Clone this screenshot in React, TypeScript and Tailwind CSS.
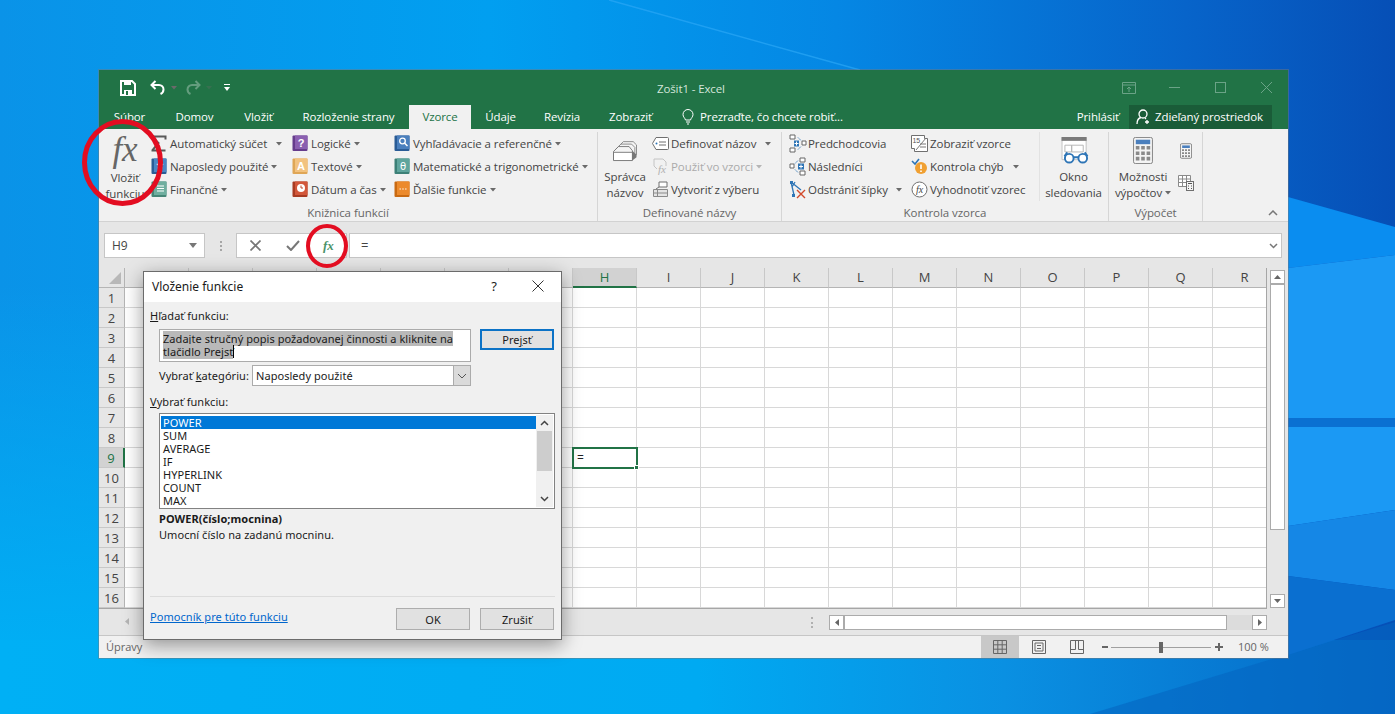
import { ReactNode } from 'react';

const COLUMNS = ['A', 'B', 'C', 'D', 'E', 'F', 'G', 'H', 'I', 'J', 'K', 'L', 'M', 'N', 'O', 'P', 'Q', 'R'];
// columns A-G sit behind the dialog, their letters never show
const HIDDEN_LABELS = ['A', 'B', 'C', 'D', 'E', 'F', 'G'];
const ROWS = Array.from({ length: 16 }, (_, i) => i + 1);
const FUNCTIONS = ['POWER', 'SUM', 'AVERAGE', 'IF', 'HYPERLINK', 'COUNT', 'MAX'];

const Wallpaper = () => (
  <svg className="absolute inset-0" width="1395" height="714" viewBox="0 0 1395 714">
    <defs>
      <linearGradient id="base" x1="0" y1="0" x2="1" y2="0">
        <stop offset="0" stopColor="#0a93e8" />
        <stop offset="0.35" stopColor="#019ff0" />
        <stop offset="0.6" stopColor="#0587e4" />
        <stop offset="0.85" stopColor="#0764ca" />
        <stop offset="1" stopColor="#064fb6" />
      </linearGradient>
      <linearGradient id="low" x1="0" y1="0" x2="0" y2="1">
        <stop offset="0.4" stopColor="#00b4f6" stopOpacity="0" />
        <stop offset="0.95" stopColor="#00b0f5" stopOpacity="1" />
      </linearGradient>
      <linearGradient id="strip" x1="0" y1="0" x2="1" y2="0">
        <stop offset="0" stopColor="#00b0f5" />
        <stop offset="0.5" stopColor="#00aaf2" />
        <stop offset="0.72" stopColor="#0a90e2" />
        <stop offset="1" stopColor="#0568c6" />
      </linearGradient>
    </defs>
    <rect width="1395" height="714" fill="url(#base)" />
    <rect width="99" height="714" fill="url(#low)" />
    <rect y="640" width="1395" height="74" fill="url(#strip)" />
    <polygon points="1090,714 1395,622 1395,714" fill="#0566c2" fillOpacity="0.6" />
    <polygon points="1288,197 1395,227 1395,255 1288,268" fill="#0a8df0" />
    <polygon points="1288,268 1395,255 1395,510 1288,526" fill="#1b99f4" />
    <polygon points="1288,526 1395,510 1395,590 1288,576" fill="#1587e6" />
    <polygon points="1288,576 1395,590 1395,620 1288,655" fill="#0a6fd0" />
    <rect x="1288" y="418" width="107" height="9" fill="#0a70d2" />
    <line x1="609" y1="0" x2="860" y2="70" stroke="#2ba6f5" strokeWidth="1.5" strokeOpacity="0.7" />
  </svg>
);

const Caret = ({ ml = 'ml-[4px]', dim = false }: { ml?: string; dim?: boolean }) => (
  <svg width="6" height="4" viewBox="0 0 6 4" className={ml}>
    <path d="M0 0h6L3 3.5z" fill={dim ? '#b5b5b5' : '#6a6a6a'} />
  </svg>
);

const Book = ({ page, spine, children }: { page: string; spine: string; children?: ReactNode }) => (
  <svg width="16" height="17" viewBox="0 0 16 17">
    <rect x="0.5" y="0.5" width="15" height="15.5" rx="1" fill={spine} />
    <rect x="3" y="0.5" width="12.5" height="13.5" fill={page} />
    {children}
  </svg>
);

const icons: Record<string, ReactNode> = {
  sigma: (
    <svg width="17" height="17" viewBox="0 0 17 17">
      <path d="M1.5 1.5h13v3M14.5 15.5h-13v-0.5l6-7-6-6" fill="none" stroke="#595959" strokeWidth="2" />
    </svg>
  ),
  recent: (
    <Book page="#4a86c5" spine="#2a5d96">
      <path d="M9 3l1.2 2.6 2.6.3-2 1.8.6 2.7L9 9 6.6 10.4l.6-2.7-2-1.8 2.6-.3z" fill="#d8e7f6" />
    </Book>
  ),
  finance: (
    <Book page="#6fae9f" spine="#468677">
      <path d="M6 5h7M6 7.5h7M6 10h7" stroke="#fff" strokeWidth="1.2" />
    </Book>
  ),
  logic: (
    <Book page="#8a5fb0" spine="#653c8c">
      <text x="9" y="12" textAnchor="middle" fontSize="11" fontWeight="700" fill="#fff" fontFamily="Liberation Sans">?</text>
    </Book>
  ),
  text: (
    <Book page="#f2c27f" spine="#dfa656">
      <text x="9" y="12" textAnchor="middle" fontSize="11" fontWeight="700" fill="#fff" fontFamily="Liberation Sans">A</text>
    </Book>
  ),
  date: (
    <Book page="#d2573a" spine="#a83b22">
      <circle cx="9" cy="7" r="4" fill="#fff" />
      <path d="M9 4.5V7h2" fill="none" stroke="#c1482c" strokeWidth="1" />
    </Book>
  ),
  lookup: (
    <Book page="#4a7fbd" spine="#2a5c96">
      <circle cx="8.5" cy="6" r="2.8" fill="none" stroke="#fff" strokeWidth="1.3" />
      <path d="M10.5 8l3 3" stroke="#fff" strokeWidth="1.5" />
    </Book>
  ),
  math: (
    <Book page="#5fa59d" spine="#3c8077">
      <text x="9" y="11.5" textAnchor="middle" fontSize="10" fill="#fff" fontFamily="DejaVu Sans">θ</text>
    </Book>
  ),
  more: (
    <Book page="#ec8a2c" spine="#c96a12">
      <path d="M5.5 8h1.4M8.3 8h1.4M11.1 8h1.4" stroke="#fff" strokeWidth="1.2" />
    </Book>
  ),
  define: (
    <svg width="17" height="13" viewBox="0 0 17 13">
      <path d="M4 .5h11.5a1 1 0 0 1 1 1v10a1 1 0 0 1-1 1H4L.5 6.5z" fill="#fff" stroke="#6f6f6f" />
      <circle cx="4.5" cy="6.5" r="1" fill="#2e75b6" />
      <path d="M7 5h7M7 8h7" stroke="#6f6f6f" />
    </svg>
  ),
  useFormula: (
    <svg width="17" height="17" viewBox="0 0 17 17">
      <path d="M2 1h9l3 3v4M2 1v7l3 3" fill="none" stroke="#c4c4c4" />
      <text x="6" y="15" fontSize="11" fontStyle="italic" fill="#b0b0b0" fontFamily="Liberation Serif">fx</text>
    </svg>
  ),
  createSel: (
    <svg width="17" height="17" viewBox="0 0 17 17">
      <path d="M1.5 8.5h14v7h-14z" fill="#e4e4e4" stroke="#8a8a8a" />
      <path d="M5.5 8.5v7M1.5 12h14" stroke="#8a8a8a" />
      <path d="M7 1h8v5H7z" fill="#fff" stroke="#6f6f6f" />
      <path d="M7 6L4 8" stroke="#6f6f6f" />
    </svg>
  ),
  precedents: (
    <svg width="18" height="19" viewBox="0 0 18 19">
      <path d="M1 1h5v4H1zM1 14h5v4H1zM13 7h4v4h-4z" fill="#fff" stroke="#666" />
      <path d="M5 6.5h5v6H5z" fill="#2e75b6" />
      <path d="M7.5 7.5v4M5.5 9.5h4" stroke="#fff" />
      <path d="M9 3.5l3 3M9 15.5l3-3" stroke="#2e75b6" strokeDasharray="1.5 1" />
    </svg>
  ),
  dependents: (
    <svg width="18" height="19" viewBox="0 0 18 19">
      <path d="M11 1h5v4h-5zM11 14h5v4h-5zM1 7h4v4H1z" fill="#fff" stroke="#666" />
      <path d="M9 6.5h6v6H9z" fill="#2e75b6" />
      <path d="M12 7.5v4M10 9.5h4" stroke="#fff" />
      <path d="M6 6.5l3-3M6 12.5l3 3" stroke="#2e75b6" strokeDasharray="1.5 1" />
    </svg>
  ),
  removeArrows: (
    <svg width="18" height="18" viewBox="0 0 18 18">
      <path d="M2 1l3 13M2 1l10 8M6 1l-3 5" fill="none" stroke="#2e75b6" strokeWidth="1.3" />
      <path d="M1 0h3v3H1zM3 13h3v3H3z" fill="#2e75b6" />
      <path d="M8 9l8 8M16 9l-8 8" stroke="#d2492a" strokeWidth="1.4" />
    </svg>
  ),
  showFormulas: (
    <svg width="17" height="17" viewBox="0 0 17 17">
      <path d="M.5.5h13v3h3v13h-13v-3h-3z" fill="#fff" stroke="#6f6f6f" />
      <text x="1.5" y="8" fontSize="7" fill="#555" fontFamily="Liberation Sans">15</text>
      <path d="M5 15l10-12M9 9h6M9 12h6" stroke="#777" />
    </svg>
  ),
  errorCheck: (
    <svg width="17" height="17" viewBox="0 0 17 17">
      <path d="M1 3l3 3 4-5" fill="none" stroke="#2e75b6" strokeWidth="1.6" />
      <circle cx="10" cy="10" r="6" fill="#f0a032" />
      <path d="M10 6.500v4.500M10 12.500v1.500" stroke="#fff" strokeWidth="1.6" />
    </svg>
  ),
  evaluate: (
    <svg width="17" height="17" viewBox="0 0 17 17">
      <circle cx="8.5" cy="8.5" r="7.5" fill="#fff" stroke="#6f6f6f" />
      <text x="8.5" y="12" textAnchor="middle" fontSize="10" fontStyle="italic" fill="#444" fontFamily="Liberation Serif">fx</text>
    </svg>
  ),
};

const Item = ({
  icon,
  label,
  caret,
  dim = false,
}: {
  icon: string;
  label: string;
  caret?: string;
  dim?: boolean;
}) => (
  <div className={`flex h-[23px] items-center whitespace-nowrap ${dim ? 'text-[#ababab]' : ''}`}>
    <span className="flex w-[19px] shrink-0 items-center justify-start">{icons[icon]}</span>
    <span>{label}</span>
    {caret && <Caret ml={caret} dim={dim} />}
  </div>
);

const Group = ({
  label,
  className,
  children,
}: {
  label: string;
  className: string;
  children: ReactNode;
}) => (
  <div className={`flex shrink-0 flex-col border-r border-[#d6d6d6] ${className}`}>
    <div className="flex h-[69px]">{children}</div>
    <div className="mt-[4px] text-center leading-[15px] text-[#666]">{label}</div>
  </div>
);

const ToolBar = () => (
  <div className="flex h-[59px] flex-col bg-[#217346] font-['Open_Sans',sans-serif] text-[11.5px] tracking-[-0.12px] text-white">
    <div className="flex h-[35px] items-center">
      <div className="flex w-[558px] items-center pl-[21px]">
        <svg width="16" height="16" viewBox="0 0 16 16">
          <path d="M1 1h11l3 3v11H1z" fill="none" stroke="#fff" strokeWidth="2" />
          <path d="M4 1h7v4H4zM4 10h8v5H4z" fill="#fff" />
          <path d="M6 11h2v4H6z" fill="#217346" />
        </svg>
        <svg className="ml-[14px]" width="16" height="16" viewBox="0 0 16 16">
          <path d="M5.5 1L1.5 5l4 4" fill="none" stroke="#fff" strokeWidth="2" />
          <path d="M2 5h7a4.5 4.5 0 0 1 4.5 4.5c0 2-1 3.5-3 4.5" fill="none" stroke="#fff" strokeWidth="2" />
        </svg>
        <Caret ml="ml-[5px]" />
        <svg className="ml-[8px]" width="16" height="16" viewBox="0 0 16 16" opacity="0.3">
          <path d="M10.5 1l4 4-4 4" fill="none" stroke="#fff" strokeWidth="2" />
          <path d="M14 5H7a4.5 4.5 0 0 0-4.5 4.5c0 2 1 3.5 3 4.5" fill="none" stroke="#fff" strokeWidth="2" />
        </svg>
        <span className="opacity-30">
          <Caret ml="ml-[5px]" />
        </span>
        <svg className="ml-[12px]" width="6" height="7" viewBox="0 0 6 7">
          <path d="M0 0h6v1H0zM0 3h6L3 7z" fill="#fff" />
        </svg>
      </div>
      <div className="mt-[2px] text-[#d4e6db]">Zošit1 - Excel</div>
      <div className="ml-auto flex items-center pr-[16px] text-[#6ba387]">
        <svg width="14" height="12" viewBox="0 0 14 12">
          <path d="M.5.5h13v11H.5zM.5 3h13M7 10V5M5 7l2-2 2 2" fill="none" stroke="currentColor" />
        </svg>
        <div className="ml-[33px] h-px w-[11px] bg-[#6ba387]" />
        <div className="ml-[35px] h-[11px] w-[11px] border border-[#6ba387]" />
        <svg className="ml-[35px]" width="11" height="11" viewBox="0 0 11 11">
          <path d="M0 0l11 11M11 0L0 11" stroke="currentColor" />
        </svg>
      </div>
    </div>
    <div className="flex h-[24px] items-stretch leading-[24px]">
      <div className="w-[61px] text-center">Súbor</div>
      <div className="w-[69px] text-center">Domov</div>
      <div className="w-[59px] text-center">Vložiť</div>
      <div className="w-[121px] text-center">Rozloženie strany</div>
      <div className="w-[62px] bg-[#f1f1f1] text-center text-[#217346]">Vzorce</div>
      <div className="w-[59px] text-center">Údaje</div>
      <div className="w-[64px] text-center">Revízia</div>
      <div className="w-[73px] text-center">Zobraziť</div>
      <div className="flex items-center pl-[15px]">
        <svg width="12" height="16" viewBox="0 0 12 16">
          <path d="M3.5 11C3 9 1 8 1 5.5a5 5 0 0 1 10 0C11 8 9 9 8.5 11zM4 13h4M5 15h2" fill="none" stroke="#fff" />
        </svg>
        <span className="ml-[6px]">Prezraďte, čo chcete robiť...</span>
      </div>
      <div className="ml-auto mr-[10px]">Prihlásiť</div>
      <div className="mr-[16px] flex w-[143px] items-center bg-[#1a5c38] pl-[7px]">
        <svg width="16" height="16" viewBox="0 0 16 16">
          <circle cx="7" cy="5" r="4" fill="none" stroke="#fff" strokeWidth="1.3" />
          <path d="M1 15c0-4 2-6 4-6.500M9 9l1 1M11 11v4M9 13h4" fill="none" stroke="#fff" strokeWidth="1.3" />
        </svg>
        <span className="ml-[3px]">Zdieľaný prostriedok</span>
      </div>
    </div>
  </div>
);

const Ribbon = () => (
  <div className="relative flex h-[93px] border-b border-[#d2d2d2] bg-[#f1f1f1] pt-[3px] text-[11.5px] leading-[16px] tracking-[-0.06px] text-[#444]">
    <Group label="Knižnica funkcií" className="w-[499px]">
      <div className="flex w-[52px] shrink-0 flex-col items-center">
        <div className="h-[36px] font-['Liberation_Serif',serif] text-[35px] italic leading-[36px] text-[#666]">fx</div>
        <div className="mt-[2px] text-center">Vložiť</div>
        <div className="text-center">funkciu</div>
      </div>
      <div className="w-[141px] shrink-0">
        <Item icon="sigma" label="Automatický súčet" caret="ml-[9px]" />
        <Item icon="recent" label="Naposledy použité" caret="ml-[3px]" />
        <Item icon="finance" label="Finančné" caret="ml-[3px]" />
      </div>
      <div className="w-[102px] shrink-0">
        <Item icon="logic" label="Logické" caret="ml-[3px]" />
        <Item icon="text" label="Textové" caret="ml-[3px]" />
        <Item icon="date" label="Dátum a čas" caret="ml-[3px]" />
      </div>
      <div className="shrink-0">
        <Item icon="lookup" label="Vyhľadávacie a referenčné" caret="ml-[3px]" />
        <Item icon="math" label="Matematické a trigonometrické" caret="ml-[3px]" />
        <Item icon="more" label="Ďalšie funkcie" caret="ml-[3px]" />
      </div>
    </Group>
    <Group label="Definované názvy" className="w-[184px]">
      <div className="flex w-[54px] shrink-0 flex-col items-center pt-[8px]">
        <svg width="28" height="24" viewBox="0 0 32 28">
          <path d="M8 8l6-6h12l4 4v12h-2" fill="#f4f4f4" stroke="#777" />
          <path d="M5 11l6-6h13l4 4v12h-2" fill="#f4f4f4" stroke="#777" />
          <path d="M2 14l6-6h13l4 5v11H2z" fill="#f4f4f4" stroke="#666" />
          <path d="M2 15h23v10H2z" fill="#fff" stroke="#666" />
          <path d="M25 13l5 5v3l-5 4z" fill="#777" />
        </svg>
        <div className="mt-[6px]">Správca</div>
        <div>názvov</div>
      </div>
      <div className="shrink-0">
        <Item icon="define" label="Definovať názov" caret="ml-[9px]" />
        <Item icon="useFormula" label="Použiť vo vzorci" caret="ml-[3px]" dim />
        <Item icon="createSel" label="Vytvoriť z výberu" />
      </div>
    </Group>
    <Group label="Kontrola vzorca" className="w-[327px]">
      <div className="ml-[7px] w-[122px] shrink-0">
        <Item icon="precedents" label="Predchodcovia" />
        <Item icon="dependents" label="Následníci" />
        <Item icon="removeArrows" label="Odstrániť šípky" caret="ml-[8px]" />
      </div>
      <div className="w-[128px] shrink-0">
        <Item icon="showFormulas" label="Zobraziť vzorce" />
        <Item icon="errorCheck" label="Kontrola chýb" caret="ml-[9px]" />
        <Item icon="evaluate" label="Vyhodnotiť vzorec" />
      </div>
      <div className="flex w-[68px] shrink-0 flex-col items-center border-l border-[#e2e2e2] pt-[5px]">
        <svg className="ml-[4px]" width="30" height="28" viewBox="0 0 30 28">
          <path d="M.5.5h25v23H.5z" fill="#fff" stroke="#c2c2c2" />
          <path d="M0 0h26v4H0z" fill="#7a7a7a" />
          <path d="M3.500 8.500h7v7h-7zM10.500 8.500h12v7h-12z" fill="none" stroke="#b5b5b5" />
          <circle cx="8" cy="22" r="4.500" fill="#fff" stroke="#2e75b6" strokeWidth="2" />
          <circle cx="22" cy="22" r="4.500" fill="#fff" stroke="#2e75b6" strokeWidth="2" />
          <path d="M12 21h6M3 20l3-4M27 20l-3-4" stroke="#2e75b6" strokeWidth="2" fill="none" />
        </svg>
        <div className="mt-[5px]">Okno</div>
        <div>sledovania</div>
      </div>
    </Group>
    <Group label="Výpočet" className="w-[94px]">
      <div className="flex w-[68px] shrink-0 flex-col items-center pt-[5px]">
        <svg width="20" height="28" viewBox="0 0 22 30">
          <rect x="0.5" y="0.5" width="21" height="29" rx="2" fill="#f4f4f4" stroke="#7a7a7a" />
          <path d="M3 3h16v5H3z" fill="#4a7fbd" />
          <path d="M3 10h4v4H3zM9 10h4v4H9zM15 10h4v4h-4zM3 16h4v4H3zM9 16h4v4H9zM15 16h4v4h-4zM3 22h4v4H3zM9 22h4v4H9zM15 22h4v4h-4z" fill="#8a8a8a" />
        </svg>
        <div className="mt-[5px]">Možnosti</div>
        <div className="flex items-center">
          výpočtov
          <Caret ml="ml-[3px]" />
        </div>
      </div>
      <div className="flex w-[18px] flex-col items-center gap-[16px] pt-[11px]">
        <svg width="12" height="16" viewBox="0 0 14 18">
          <rect x="0.5" y="0.5" width="13" height="17" rx="1.500" fill="#f4f4f4" stroke="#7a7a7a" />
          <path d="M2.500 2.500h9v3h-9z" fill="#4a7fbd" />
          <path d="M2.500 7h2v2h-2zM6 7h2v2H6zM9.500 7h2v2h-2zM2.500 10.500h2v2h-2zM6 10.500h2v2H6zM9.500 10.500h2v2h-2zM2.500 14h2v2h-2zM6 14h2v2H6zM9.500 14h2v2h-2z" fill="#777" />
        </svg>
        <svg width="16" height="16" viewBox="0 0 16 16">
          <path d="M.5.500h12v11H.5zM.5 4h12M.5 7.500h12M4.500.500v11M8.500.500v11" fill="#fff" stroke="#8a8a8a" />
          <rect x="8.500" y="6.500" width="7" height="9" fill="#f4f4f4" stroke="#6f6f6f" />
          <path d="M10 8.500h4M10 11h1M13 11h1M10 13.500h1M13 13.500h1" stroke="#555" />
        </svg>
      </div>
    </Group>
    <svg className="absolute bottom-[5px] right-[10px]" width="10" height="6" viewBox="0 0 10 6">
      <path d="M1 5l4-4 4 4" fill="none" stroke="#777" strokeWidth="1.5" />
    </svg>
  </div>
);

const FormulaBar = () => (
  <div className="flex h-[46px] items-start bg-[#e6e6e6] pl-[5px] pr-[6px] pt-[11px] text-[12px] text-[#444]">
    <div className="flex h-[25px] w-[101px] items-center border border-[#c6c6c6] bg-white pl-[7px] pr-[7px]">
      H9
      <svg className="ml-auto" width="8" height="5" viewBox="0 0 8 5">
        <path d="M0 0h8L4 5z" fill="#777" />
      </svg>
    </div>
    <div className="flex h-[25px] w-[31px] flex-col items-center justify-center gap-[2px]">
      <div className="h-[2px] w-[2px] bg-[#a6a6a6]" />
      <div className="h-[2px] w-[2px] bg-[#a6a6a6]" />
      <div className="h-[2px] w-[2px] bg-[#a6a6a6]" />
    </div>
    <div className="flex h-[25px] w-[111px] items-center border border-[#c6c6c6] bg-white pl-[13px]">
      <svg width="11" height="11" viewBox="0 0 11 11">
        <path d="M.5.500l10 10M10.500.500l-10 10" stroke="#777" strokeWidth="1.700" />
      </svg>
      <svg className="ml-[25px]" width="14" height="11" viewBox="0 0 14 11">
        <path d="M1 6l4 4 8-9" fill="none" stroke="#777" strokeWidth="2" />
      </svg>
      <span className="ml-[23px] font-['Liberation_Serif',serif] text-[13px] font-bold italic text-[#4b9369]">fx</span>
    </div>
    <div className="ml-[2px] flex h-[25px] flex-1 items-center border border-[#c6c6c6] bg-white pl-[11px] pr-[3px] text-[13px]">
      =
      <svg className="ml-auto" width="9" height="6" viewBox="0 0 9 6">
        <path d="M1 1l3.500 3.500L8 1" fill="none" stroke="#777" strokeWidth="1.500" />
      </svg>
    </div>
  </div>
);

const Sheet = () => (
  <div className="flex h-[341px] bg-[#e6e6e6]">
    <div className="w-[1168px] shrink-0 overflow-hidden border-b border-r border-[#a6a6a6] bg-white">
      <div className="flex h-[20px] w-[1300px] text-[13px] leading-[19px] text-[#444]">
        <div className="flex w-[26px] shrink-0 items-end justify-end border-b border-r border-[#b5b5b5] bg-[#e6e6e6] pb-[3px] pr-[3px]">
          <svg width="12" height="12" viewBox="0 0 12 12">
            <path d="M12 0v12H0z" fill="#b8b8b8" />
          </svg>
        </div>
        {COLUMNS.map((c) => (
          <div
            key={c}
            className={
              c === 'H'
                ? 'w-[64px] shrink-0 border-b-2 border-r border-b-[#217346] border-r-[#c8c8c8] bg-[#d2d2d2] text-center text-[#217346]'
                : 'w-[64px] shrink-0 border-b border-r border-b-[#b5b5b5] border-r-[#c8c8c8] bg-[#e6e6e6] text-center'
            }
          >
            {HIDDEN_LABELS.includes(c) ? '' : c}
          </div>
        ))}
      </div>
      {ROWS.map((r) => (
        <div key={r} className="flex h-[20px] w-[1300px]">
          <div
            className={
              r === 9
                ? 'w-[26px] shrink-0 border-b border-r-2 border-b-[#c8c8c8] border-r-[#217346] bg-[#d2d2d2] text-center text-[13px] leading-[21px] text-[#217346]'
                : 'w-[26px] shrink-0 border-b border-r border-b-[#c8c8c8] border-r-[#b5b5b5] bg-[#e6e6e6] text-center text-[13px] leading-[21px] text-[#444]'
            }
          >
            {r}
          </div>
          {COLUMNS.map((c) => (
            <div key={c} className="relative w-[64px] shrink-0 border-b border-r border-[#d8d8d8]">
              {r === 9 && c === 'H' && (
                <div className="absolute left-[-1px] top-[-1px] z-10 h-[22px] w-[66px] border-2 border-[#217346] bg-white pl-[3px] text-[12px] leading-[17px] text-[#222]">
                  =
                  <div className="absolute bottom-[-3px] right-[-3px] h-[5px] w-[5px] border border-white bg-[#217346]" />
                </div>
              )}
            </div>
          ))}
        </div>
      ))}
    </div>
    <div className="ml-[3px] mt-[2px] flex h-[338px] w-[15px] flex-col">
      <div className="flex h-[14px] items-center justify-center border border-[#ababab] bg-white">
        <svg width="7" height="4" viewBox="0 0 7 4">
          <path d="M3.500 0L7 4H0z" fill="#666" />
        </svg>
      </div>
      <div className="h-[246px] border border-[#ababab] bg-white" />
      <div className="flex-1" />
      <div className="flex h-[14px] items-center justify-center border border-[#ababab] bg-white">
        <svg width="7" height="4" viewBox="0 0 7 4">
          <path d="M0 0h7L3.500 4z" fill="#666" />
        </svg>
      </div>
    </div>
  </div>
);

const Bottom = () => (
  <>
    <div className="flex h-[27px] items-start border-b border-[#c6c6c6] bg-[#e6e6e6] pt-[6px]">
      <svg className="ml-[26px] mt-[3px]" width="4" height="7" viewBox="0 0 4 7">
        <path d="M4 0v7L0 3.500z" fill="#b5b5b5" />
      </svg>
      <div className="ml-[682px] mt-[2px] flex h-[11px] flex-col justify-between">
        <div className="h-[2px] w-[2px] bg-[#b0b0b0]" />
        <div className="h-[2px] w-[2px] bg-[#b0b0b0]" />
        <div className="h-[2px] w-[2px] bg-[#b0b0b0]" />
      </div>
      <div className="ml-[16px] flex h-[15px] w-[438px]">
        <div className="flex w-[15px] items-center justify-center border border-[#ababab] bg-white">
          <svg width="4" height="7" viewBox="0 0 4 7">
            <path d="M4 0v7L0 3.500z" fill="#666" />
          </svg>
        </div>
        <div className="w-[383px] border border-[#ababab] bg-white" />
        <div className="flex-1 bg-[#dcdcdc]" />
        <div className="flex w-[15px] items-center justify-center border border-[#ababab] bg-white">
          <svg width="4" height="7" viewBox="0 0 4 7">
            <path d="M0 0v7l4-3.500z" fill="#666" />
          </svg>
        </div>
      </div>
    </div>
    <div className="flex h-[22px] items-stretch bg-[#f1f1f1] text-[11px] text-[#666]">
      <div className="ml-[7px] self-center">Úpravy</div>
      <div className="ml-auto flex w-[38px] items-center justify-center bg-[#c8c8c8]">
        <svg width="14" height="14" viewBox="0 0 14 14">
          <path d="M.5.500h13v13H.5zM.5 4.800h13M.5 9.200h13M4.800.500v13M9.200.500v13" fill="none" stroke="#666" />
        </svg>
      </div>
      <div className="flex w-[39px] items-center justify-center">
        <svg width="14" height="14" viewBox="0 0 14 14">
          <path d="M.5.500h13v13H.5z" fill="none" stroke="#666" />
          <path d="M3 3h8v8H3zM5 5.500h4M5 8.500h4" fill="none" stroke="#666" />
        </svg>
      </div>
      <div className="flex w-[38px] items-center justify-center">
        <svg width="14" height="14" viewBox="0 0 14 14">
          <path d="M.5.500h13v13H.5zM.5 9.500h5M8.500 9.500h5M5.500.500v9M8.500.500v9" fill="none" stroke="#666" />
        </svg>
      </div>
      <div className="ml-[6px] flex items-center">
        <div className="h-[2px] w-[6px] bg-[#666]" />
        <div className="relative ml-[3px] h-px w-[100px] bg-[#a0a0a0]">
          <div className="absolute left-[48px] top-[-5px] h-[11px] w-[4px] bg-[#666]" />
        </div>
        <svg className="ml-[4px]" width="8" height="8" viewBox="0 0 8 8">
          <path d="M0 4h8M4 0v8" stroke="#666" strokeWidth="2" />
        </svg>
      </div>
      <div className="ml-[15px] mr-[20px] w-[30px] self-center whitespace-nowrap text-right">100 %</div>
    </div>
  </>
);

const DialogButton = ({ className, children }: { className: string; children: ReactNode }) => (
  <div className={`flex h-[22px] w-[74px] items-center justify-center border border-[#adadad] bg-[#e1e1e1] ${className}`}>
    {children}
  </div>
);

const Dialog = () => (
  <div className="absolute left-[143px] top-[271px] z-20 flex h-[369px] w-[419px] flex-col border border-[#6b6b6b] bg-[#f0f0f0] font-['Noto_Sans',sans-serif] text-[11px] leading-[13px] tracking-[0.05px] text-[#1a1a1a] shadow-[0_5px_18px_rgba(0,0,0,0.4)]">
    <div className="flex h-[30px] shrink-0 items-center bg-white pb-[2px] pl-[8px] text-[12px] tracking-normal">
      Vloženie funkcie
      <span className="ml-auto text-[13px]">?</span>
      <svg className="ml-[35px] mr-[17px]" width="12" height="12" viewBox="0 0 12 12">
        <path d="M.5.500l11 11M11.500.500l-11 11" stroke="#333" />
      </svg>
    </div>
    <div className="flex flex-1 flex-col pl-[6px] pr-[6px]">
      <div className="mt-[7px] h-[14px]">
        <u>H</u>ľadať funkciu:
      </div>
      <div className="mt-[6px] flex items-start">
        <div className="ml-[9px] h-[33px] w-[312px] border border-[#ababab] bg-white pl-[3px] pt-[2px]">
          <span className="bg-[#b9b9b9]">Zadajte stručný popis požadovanej činnosti a kliknite na</span>
          <br />
          <span className="bg-[#b9b9b9]">tlačidlo Prejsť</span>
          <span className="inline-block h-[13px] w-px bg-black align-top" />
        </div>
        <div className="ml-[9px] flex h-[21px] w-[74px] items-center justify-center border-2 border-[#0b72c6] bg-[#e1e1e1]">
          Pre<u>j</u>sť
        </div>
      </div>
      <div className="mt-[3px] flex h-[21px] items-center">
        <div className="ml-[9px] w-[93px]">
          Vybrať <u>k</u>ategóriu:
        </div>
        <div className="flex h-[21px] w-[219px] items-center border border-[#ababab] bg-white pl-[3px]">
          Naposledy použité
          <div className="ml-auto flex h-full w-[17px] items-center justify-center border-l border-[#ababab] bg-[#dadada]">
            <svg width="10" height="6" viewBox="0 0 10 6">
              <path d="M1 1l4 4 4-4" fill="none" stroke="#555" />
            </svg>
          </div>
        </div>
      </div>
      <div className="mt-[9px] h-[14px]">
        <u>V</u>ybrať funkciu:
      </div>
      <div className="ml-[9px] mt-[4px] flex h-[96px] w-[396px] border border-[#828282] bg-white p-px">
        <div className="w-[376px] pt-px">
          {FUNCTIONS.map((name, i) => (
            <div
              key={name}
              className={i === 0 ? 'h-[13px] bg-[#0078d7] pl-[2px] text-white' : 'h-[13px] pl-[2px]'}
            >
              {name}
            </div>
          ))}
        </div>
        <div className="flex w-[17px] flex-col items-center bg-[#f0f0f0]">
          <svg className="mt-[5px]" width="9" height="6" viewBox="0 0 9 6">
            <path d="M1 5l3.500-3.500L8 5" fill="none" stroke="#444" strokeWidth="1.500" />
          </svg>
          <div className="mt-[5px] h-[40px] w-[15px] bg-[#cdcdcd]" />
          <svg className="mt-auto mb-[5px]" width="9" height="6" viewBox="0 0 9 6">
            <path d="M1 1l3.500 3.500L8 1" fill="none" stroke="#444" strokeWidth="1.500" />
          </svg>
        </div>
      </div>
      <div className="ml-[9px] mt-[3px] h-[14px] font-bold">POWER(číslo;mocnina)</div>
      <div className="ml-[9px] mt-[2px] h-[14px]">Umocní číslo na zadanú mocninu.</div>
      <div className="mt-[54px] h-px bg-[#dcdcdc]" />
      <div className="mt-[11px] flex items-center">
        <span className="mb-[5px] text-[#0066cc] underline">Pomocník pre túto funkciu</span>
        <DialogButton className="ml-auto">OK</DialogButton>
        <DialogButton className="ml-[10px] mr-[1px]">Zrušiť</DialogButton>
      </div>
    </div>
  </div>
);

const RedMarks = () => (
  <svg className="pointer-events-none absolute inset-0 z-30" width="1395" height="714" viewBox="0 0 1395 714">
    <ellipse cx="122.500" cy="162.500" rx="38" ry="41" fill="none" stroke="#e30d21" strokeWidth="5" />
    <ellipse cx="327" cy="246" rx="19" ry="20" fill="none" stroke="#e30d21" strokeWidth="4" />
  </svg>
);

export default function App() {
  return (
    <div className="relative h-[714px] w-[1395px] overflow-hidden pl-[99px] pt-[70px] font-['Open_Sans',sans-serif]">
      <Wallpaper />
      <div className="relative flex h-[588px] w-[1189px] flex-col shadow-[0_0_0_1px_rgba(120,120,120,0.45)]">
        <ToolBar />
        <Ribbon />
        <FormulaBar />
        <Sheet />
        <Bottom />
      </div>
      <Dialog />
      <RedMarks />
    </div>
  );
}
